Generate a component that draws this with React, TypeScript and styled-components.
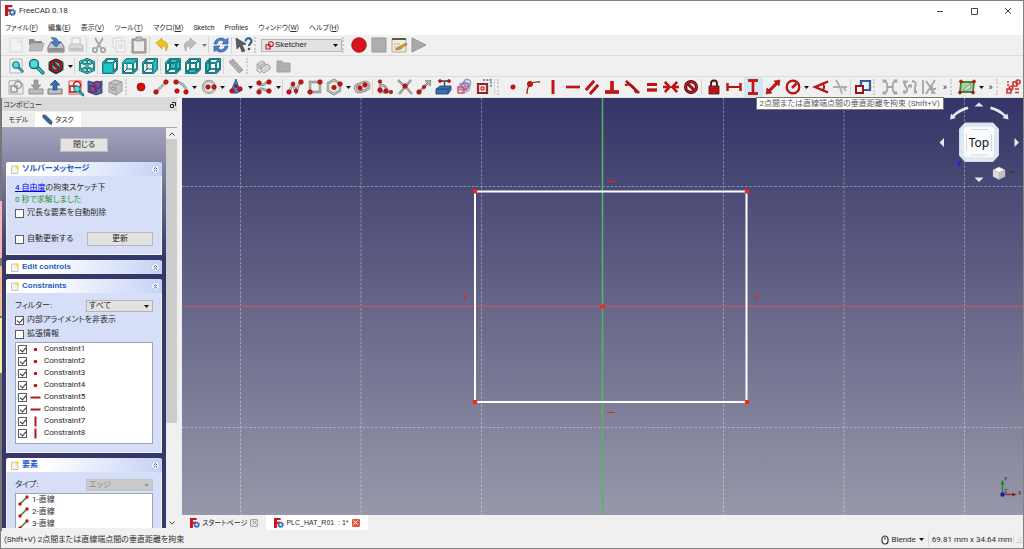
import React from 'react';
import styled, { createGlobalStyle, css } from 'styled-components';

const GlobalStyle = createGlobalStyle`
  * { box-sizing: border-box; }
  body {
    margin: 0;
    font-family: Roboto, "Noto Sans CJK JP", sans-serif;
    font-size: 8px;
    line-height: 12px;
    font-feature-settings: "palt";
    color: #2b2b2b;
    background: #f0f0f0;
  }
  button, select, input { font: inherit; font-feature-settings: inherit; color: inherit; margin: 0; }
  svg { display: block; flex: none; }
`;

/* ---------- shared drawing pieces ---------- */

const RED = '#cc1111';
const DARK = '#4a1010';
const GREY = '#a6a6a6';
const TEAL = '#1fc4c8';
const TEAL_DARK = '#0b5a60';

const Dot = ({ x, y, r = 2.3 }: { x: number; y: number; r?: number }) => (
  <circle cx={x} cy={y} r={r} fill={RED} stroke="#8a0b0b" strokeWidth=".6" />
);

const Wire = ({ d, w = 2.4 }: { d: string; w?: number }) => (
  <>
    <path d={d} fill="none" stroke="#777" strokeWidth={w} />
    <path d={d} fill="none" stroke="#c9ccc6" strokeWidth={w - 1.2} />
  </>
);

const Bold = ({ d, w = 2.4 }: { d: string; w?: number }) => (
  <>
    <path d={d} fill="none" stroke="#8a1414" strokeWidth={w} />
    <path d={d} fill="none" stroke={RED} strokeWidth={w - 0.7} />
  </>
);

const Cube = ({ face }: { face: 'iso' | 'front' | 'top' | 'right' | 'rear' | 'bottom' | 'left' }) => {
  if (face === 'iso') {
    return (
      <g fill="none" stroke={TEAL_DARK} strokeWidth="2.2" strokeLinejoin="round">
        <path d="M10 3l7 3v8l-7 3-7-3V6zM3 6l7 3 7-3M10 9v8M10 3v8M3 14l7-3 7 3" />
        <path stroke="#43d3d6" strokeWidth=".8" d="M10 3l7 3v8l-7 3-7-3V6zM3 6l7 3 7-3M10 9v8M10 3v8M3 14l7-3 7 3" />
      </g>
    );
  }
  const faces = {
    front: 'M3 7h10v10H3z',
    top: 'M3 7l4-4h10l-4 4z',
    right: 'M13 7l4-4v10l-4 4z',
    rear: 'M7 3h10v10H7z',
    bottom: 'M3 17l4-4h10l-4 4z',
    left: 'M3 7l4-4v10l-4 4z',
  };
  const frame = 'M3 7h10v10H3zM3 7l4-4h10l-4 4M17 3v10l-4 4';
  const inner = 'M7 3v10h10M7 13l-4 4';
  const hidden = face === 'rear' || face === 'bottom' || face === 'left';
  return (
    <g fill="none" strokeLinejoin="round">
      <path d={frame} fill="#e8f6f6" />
      {hidden && <path d={faces[face]} fill={TEAL} />}
      <path d={inner} stroke={TEAL_DARK} strokeWidth={hidden ? 1.6 : 1} />
      <path d={frame} stroke={TEAL_DARK} strokeWidth="2" />
      {!hidden && <path d={faces[face]} fill={TEAL} stroke={TEAL_DARK} />}
      <path d={frame} stroke="#43d3d6" strokeWidth=".6" />
    </g>
  );
};

const Magnifier = ({ x, y, s = 1 }: { x: number; y: number; s?: number }) => (
  <g transform={`translate(${x} ${y}) scale(${s})`}>
    <path d="M3 3l5 5" stroke={TEAL_DARK} strokeWidth="3.4" strokeLinecap="round" />
    <path d="M3 3l5 5" stroke={TEAL} strokeWidth="1.8" strokeLinecap="round" />
    <circle r="4" fill="#5fd6d9" stroke={TEAL_DARK} strokeWidth="1.4" />
    <circle r="3.6" fill="none" stroke={TEAL} strokeWidth=".8" />
  </g>
);

const ForbidSign = () => (
  <g fill="none">
    <circle cx="10" cy="10" r="5.4" stroke="#3c0505" strokeWidth="3.2" />
    <path d="M6.5 6.5l7 7" stroke="#3c0505" strokeWidth="2.8" />
    <circle cx="10" cy="10" r="5.4" stroke="#c3161a" strokeWidth="1.6" />
    <path d="M6.3 6.3l7.4 7.4" stroke="#c3161a" strokeWidth="1.4" />
  </g>
);

const SketchMark = ({ color }: { color: string }) => (
  <g fill="none" stroke={color} strokeWidth="1.5">
    <path d="M5 9h6v6H5z" />
    <circle cx="12" cy="8" r="3.5" />
  </g>
);

const icons: Record<string, React.ReactNode> = {
  newFile: <path d="M4 3h12v14H4zM12 3v4h4" fill="#f3f3f3" stroke="#d9d9d9" />,
  open: <><path d="M3 4h5l1 2h7v4H3z" fill="#8d8d8d" /><path d="M3 16L5 8h13l-2 8z" fill="#b9b9b9" stroke="#999" strokeWidth=".6" /></>,
  save: <><path d="M2 12l3-5h10l3 5v5H2z" fill="#c4c6c9" stroke="#777" /><path d="M3 13h14v3H3z" fill="#8e9194" /><path d="M5 3c5-1 7 1 7 4h3l-5 5-5-5h3c0-2-1-3-3-4z" fill="#4a7fc0" stroke="#285a9c" strokeWidth=".7" /></>,
  print: <><path d="M6 3h8v7H6z" fill="#f4f4f4" stroke="#c4c4c4" /><path d="M3 11l2-2h10l2 2v5H3z" fill="#d9d9d9" stroke="#bdbdbd" /><path d="M4 14h12" stroke="#aaa" /></>,
  cut: <g fill="none" stroke={GREY} strokeWidth="1.8"><path d="M6 3l6 10M14 3L8 13" /><circle cx="6" cy="15" r="2.2" /><circle cx="14" cy="15" r="2.2" /></g>,
  copy: <g fill="#f5f5f5" stroke="#d2d2d2"><path d="M4 3h9v10H4z" /><path d="M7 6h9v11H7z" /><path d="M9 9h5M9 11h5M9 13h5" /></g>,
  paste: <g><path d="M3 4h14v14H3z" fill="#a9a9a9" stroke="#8e8e8e" /><path d="M5 6h10v10H5z" fill="#ececec" /><path d="M7 2h6v4H7z" fill="#bbb" stroke="#8e8e8e" strokeWidth=".7" /></g>,
  undo: <path d="M4 8l6-5v3c6 0 7 5 4 10 0-4-1-5-4-5v3z" fill="#efc322" stroke="#c79a10" strokeWidth=".7" />,
  redo: <path d="M16 8l-6-5v3c-6 0-7 5-4 10 0-4 1-5 4-5v3z" fill="#bcbcbc" stroke="#a2a2a2" strokeWidth=".7" />,
  refresh: <g fill="#4c7fc6" stroke="#24529b" strokeWidth=".6"><path d="M3 9C4 3 11 1 15 5l2-2v6h-6l2-2C10 4 7 5 6 9z" /><path d="M17 11c-1 6-8 8-12 4l-2 2v-6h6l-2 2c3 3 6 2 7-2z" /></g>,
  whatsThis: <><path d="M2 3l10 6-4 1 3 6-3 1-2-6-3 3z" fill="#5a5f63" stroke="#333" strokeWidth=".6" /><path d="M11.500 6.500c0-4.500 6.500-4 6 0-.3 2-2.500 2-2.500 4.500" fill="none" stroke="#29598f" strokeWidth="2" /><circle cx="15" cy="14" r="1.300" fill="#29598f" /></>,
  record: <circle cx="10" cy="10" r="7.300" fill="#d9131b" stroke="#960d10" strokeWidth=".8" />,
  stop: <path d="M3 3h14v14H3z" fill="#aeaeae" stroke="#989898" />,
  edit: <><path d="M3 4h14v13H3z" fill="#f0eeda" stroke="#aaa89a" /><path d="M3 3h14v2H3z" fill="#5c5a4c" /><path d="M5 9h6M5 12h8M5 14h9" stroke="#b9b7a8" /><path d="M8 13l9-5 1 1.500-8 5-3 .5z" fill="#e29a2d" stroke="#8a5a12" strokeWidth=".6" /></>,
  play: <path d="M3 3l14 7-14 7z" fill="#a9a9a9" stroke="#959595" />,
  fitAll: <><path d="M4 3h12v14H4z" fill="#f2f2f2" stroke="#b5b5b5" /><Magnifier x={10} y={9} s={0.8} /></>,
  fitSelection: <Magnifier x={8} y={8} s={1.1} />,
  drawStyle: <><path d="M3 6l7-3 7 3v8l-7 4-7-4z" fill={TEAL} stroke={TEAL_DARK} /><ForbidSign /></>,
  iso: <Cube face="iso" />,
  front: <Cube face="front" />,
  top: <Cube face="top" />,
  right: <Cube face="right" />,
  rear: <Cube face="rear" />,
  bottom: <Cube face="bottom" />,
  left: <Cube face="left" />,
  measure: <><path d="M3 6l4-3 10 11-4 3z" fill="#b5b5b5" stroke="#969696" strokeWidth=".8" /><path d="M7 5L5.500 6M9 7L7.500 8M11 9.500L9.500 10.500M13 11.500l-1.500 1M15 14l-1.500 1" stroke="#777" strokeWidth=".7" /></>,
  part: <g fill="#d4d4d4" stroke="#9a9a9a" strokeWidth=".9"><path d="M4 8l5-3 3 2v3l-5 3-3-2z" /><path d="M8 12l6-4 3 2v3l-6 4-3-2z" /><path d="M4 8l3 2 5-3M7 10v3M4 12v3l4 2" /></g>,
  folder: <path d="M4 5h5l1 2h7v9H4z" fill="#b0b0b0" stroke="#a0a0a0" />,
  newSketch: <><path d="M3 4l10-1 4 4v10H3z" fill="#ededed" stroke="#a9a9a9" /><SketchMark color="#9b9b9b" /></>,
  editSketch: <><path d="M3 12h14v5H3z" fill="#bbb" stroke="#929292" /><path d="M8 3h4v5h3l-5 5-5-5h3z" fill="#9d9d9d" stroke="#858585" strokeWidth=".6" /></>,
  leaveSketch: <><path d="M3 12h14v5H3z" fill="#bfc1c4" stroke="#777" /><path d="M8 13h4V8h3l-5-5-5 5h3z" fill="#3c6eb4" stroke="#1e4787" strokeWidth=".7" /></>,
  viewSketch: <><path d="M4 4h12v13H4z" fill="#fbfbfb" stroke="#d33" strokeWidth=".9" /><SketchMark color={RED} /><Magnifier x={12} y={12} s={0.75} /></>,
  viewSection: <><path d="M3 4l8 2 6-2v12l-6 2-8-3z" fill="#3b6db2" stroke="#1b3d70" strokeWidth=".8" /><SketchMark color="#a3194b" /></>,
  mapSketch: <><path d="M4 6l6-3 7 2v9l-6 4-7-3z" fill="#c4c4c4" stroke="#999" /><path d="M4 6l7 2 6-3M11 8v9" fill="none" stroke="#999" /><circle cx="8" cy="11.500" r="1.600" fill="none" stroke="#8a8a8a" /></>,
  point: <circle cx="10" cy="10" r="4" fill={RED} stroke="#7d0909" strokeWidth=".7" />,
  line: <><Wire d="M5 15L15 5" /><Dot x={5} y={15} /><Dot x={15} y={5} /></>,
  arc: <><Wire d="M5 5c5 0 10 4 11 10" /><Dot x={5} y={5} /><Dot x={6} y={14} /><Dot x={15} y={15} /></>,
  circle: <><circle cx="10" cy="10" r="6" fill="none" stroke="#888" strokeWidth="2.400" /><circle cx="10" cy="10" r="6" fill="none" stroke="#c9ccc6" strokeWidth="1.200" /><Dot x={9} y={10} /><Dot x={15} y={10} /></>,
  conic: <><path d="M10 2l4 12c-2 3-7 3-9 0z" fill="#4a82c2" stroke="#1e4787" strokeWidth=".8" /><Dot x={6} y={14} /><Dot x={14} y={12} /><Dot x={10} y={9} r={1.5} /></>,
  bspline: <><Wire d="M5 15c0-6 5-2 10-1M4 6c5 5 7-1 11-1" /><Dot x={5} y={6} /><Dot x={15} y={5} /><Dot x={5} y={15} /><Dot x={15} y={14} /></>,
  polyline: <><Wire d="M4 15l4-8 3 8 4-10" /><Dot x={4} y={15} /><Dot x={8} y={7} r={2} /><Dot x={11} y={14} r={2} /><Dot x={16} y={5} /></>,
  rectangle: <><Wire d="M5 5h10v10H5z" /><Dot x={15} y={5} /><Dot x={5} y={15} /></>,
  polygon: <><Wire d="M10 3l6 3.500v7L10 17l-6-3.500v-7z" /><Dot x={10} y={10.5} /><Dot x={16} y={7} /></>,
  slot: <><Wire d="M7 7l5-2c6-1 7 6 2 8l-6 2C3 16 1 9 7 7z" /><Dot x={8} y={11} /><Dot x={13} y={8} /></>,
  fillet: <><Wire d="M5 4v11h11" /><Wire d="M5 8c6 0 7 4 7 7" /><Dot x={5} y={4.5} r={1.7} /><Dot x={5} y={13} /><Dot x={11} y={14} /><Dot x={16} y={15} r={1.7} /></>,
  trim: <><Wire d="M3 3c4 4 6 6 7 6l7 8M16 3L4 17" w={2.2} /><Dot x={10} y={9} /></>,
  extend: <><Wire d="M5 15L15 5M11 4h5v5" w={2.2} /><Dot x={5} y={15} /><Dot x={10} y={10} r={1.7} /></>,
  external: <><path d="M2 12l4-3h11v4l-3 4H2z" fill="#3c6fae" stroke="#1b3d70" strokeWidth=".8" /><path d="M2 12h12v5M14 12l3-3" fill="none" stroke="#1b3d70" strokeWidth=".7" /><path d="M6 4h9M10.500 4v5" stroke="#444" strokeWidth="1.400" /><Dot x={6} y={4} r={1.5} /><Dot x={15} y={4} r={1.5} /></>,
  carbonCopy: <><g transform="translate(1 -2)"><SketchMark color="#7c9ce0" /></g><g transform="translate(-1 1)"><SketchMark color="#dc4a55" /></g><circle cx="11" cy="10" r="5" fill="none" stroke="#8f9fe0" strokeWidth="1.200" /></>,
  construction: <><path d="M9 3h8v8" fill="none" stroke="#3f72b8" strokeWidth="1.500" strokeDasharray="2 1.200" /><path d="M4 7h9v9H4z" fill="none" stroke={DARK} strokeWidth="2.200" /><path d="M4 7h9v9H4z" fill="none" stroke="#e03434" strokeWidth="1.200" /><path d="M7 10h3v3H7z" fill="#f6caca" stroke={RED} /></>,
  coincident: <circle cx="10" cy="10" r="2.300" fill={RED} stroke="#8a0b0b" strokeWidth=".5" />,
  pointOnObject: <><path d="M4 17C4 8 8 4 17 5" fill="none" stroke="#9c2525" strokeWidth="1.300" /><Dot x={7} y={7} r={2.7} /></>,
  vertical: <Bold d="M10 3v14" w={2.8} />,
  horizontal: <Bold d="M3 10h14" w={2.600} />,
  parallel: <Bold d="M4 13L12 4M8 17l8-9" w={2.8} />,
  perpendicular: <Bold d="M10 4v11M3 15h14" w={3.4} />,
  tangent: <><Bold d="M4 4l13 12" /><Bold d="M3 8c6-2 10 2 11 8" w={2} /></>,
  equal: <Bold d="M5 7.500h10M5 13h10" w={3} />,
  symmetric: <Bold d="M4 5l4.500 5L4 15M16 5l-4.500 5 4.500 5M2 10h6M12 10h6" w={2.600} />,
  block: <ForbidSign />,
  lock: <><path d="M7 9V6.500c0-4 6-4 6 0V9" fill="none" stroke={DARK} strokeWidth="1.800" /><path d="M5 9h10v8H5z" fill="#c81414" stroke={DARK} strokeWidth=".8" /><path d="M6 11.500h8M6 14h8" stroke="#8d0f0f" strokeWidth=".7" /></>,
  hDistance: <Bold d="M3.500 6v8M16.500 6v8M3.500 10h13" w={2.200} />,
  vDistance: <Bold d="M5 3.500h10M5 16.500h10M10 4v12" w={2.600} />,
  distance: <><Bold d="M5 15L15 5" w={3} /><path d="M17 3l-1 6-5-5zM3 17l1-6 5 5z" fill={RED} stroke="#8a1414" strokeWidth=".6" /></>,
  radius: <><circle cx="10" cy="10" r="6.300" fill="none" stroke="#8a1414" strokeWidth="2.200" /><circle cx="10" cy="10" r="6.300" fill="none" stroke={RED} strokeWidth="1.400" /><path d="M9 11l4.500-4.500" stroke={RED} strokeWidth="2.600" /></>,
  angle: <><Bold d="M17 4.500L4 10l13 5.500" w={2.200} /><Bold d="M12 7c1.500 2 1.500 4 0 6" w={1.800} /></>,
  snell: <path d="M3 10h14M6 3l4 7 2 7M13 10l3 4" fill="none" stroke="#adadad" strokeWidth="1.800" />,
  toggle: <><path d="M8 4h9v9H8z" fill="none" stroke="#1e4787" strokeWidth="2.200" /><path d="M8 4h9v9H8z" fill="none" stroke="#4f86c6" strokeWidth=".8" /><path d="M3 9h7v7H3z" fill="#fafafa" stroke="#9d1414" strokeWidth="2" /></>,
  closeShape: <g fill="none" stroke={GREY} strokeWidth="1.800"><path d="M4 4c3 1 4 3 3 6 1 3 0 5-3 6M16 4c-3 1-4 3-3 6-1 3 0 5 3 6M7 10h6" /><path d="M2.500 4h4M13.500 4h4M2.500 16h4M13.500 16h4" strokeWidth="3" /></g>,
  connect: <g fill="none" stroke={GREY} strokeWidth="1.800"><path d="M8 4C4 5 4 8 6 10s2 4-1 6M12 4c5 1 4 4 3 6v6" /><path d="M3 5h3M3 15h3M14 15h3M8 9h4" strokeWidth="3" /></g>,
  selectConstraints: <g fill="none" stroke={GREY} strokeWidth="1.800"><path d="M4 3v14M7 4l9 13M16 3l-9 14M10 12h7M13 9v8" /></g>,
  switchSpace: <><path d="M4 5h13l-1 10H3z" fill="#a9d39b" stroke="#3b8e2e" strokeWidth="1.800" /><path d="M6 13l8-7v5l-6 3z" fill="#d8d8d8" stroke="#777" strokeWidth=".7" /><Dot x={4} y={4.5} r={1.5} /><Dot x={17} y={4.5} r={1.5} /><Dot x={3} y={15.5} r={1.5} /><Dot x={16} y={15.5} r={1.5} /></>,
  gridSketch: <g fill="none" stroke="#d43434" strokeWidth="1.600"><path d="M10 5h4v4h-4z" /><circle cx="15" cy="5" r="2" /><path d="M4 12h4v4H4z" /><circle cx="8" cy="11" r="1.800" /><path d="M12 12h4M12 15.500h4M4 5h2M4 8h2" /></g>,
};

const Logo = ({ size = 11 }: { size?: number }) => (
  <svg width={size} height={size} viewBox="0 0 12 12" aria-hidden="true">
    <path d="M0 0h8v2.500H3.500v2H7v2.500H3.500V12H0z" fill="#c9141c" />
    <circle cx="8" cy="8" r="2.300" fill="none" stroke="#3f6eb0" strokeWidth="1.800" />
    <circle cx="8" cy="8" r="3.600" fill="none" stroke="#3f6eb0" strokeWidth="1.200" strokeDasharray="1.400 1.400" />
  </svg>
);

/* ---------- window chrome ---------- */

const Window = styled.div`
  display: flex;
  flex-direction: column;
  height: 100vh;
  min-height: 480px;
  border: 1px solid #828282;
`;

const TitleBar = styled.header`
  display: flex;
  align-items: center;
  gap: 3px;
  height: 19px;
  flex: none;
  padding-left: 4px;
  background: #fff;
`;

const Title = styled.h1`
  flex: 1;
  margin: 0;
  font-size: 8px;
  font-weight: 400;
`;

const CaptionButton = styled.button`
  display: flex;
  justify-content: center;
  width: 31px;
  padding: 0;
  border: 0;
  background: none;
`;

const MenuBar = styled.nav`
  display: flex;
  align-items: center;
  gap: 10px;
  height: 15px;
  flex: none;
  padding-left: 4px;
  background: #fff;
`;

const MenuLink = styled.a`
  color: #2b2b2b;
  font-size: 7px;
  text-decoration: none;
  white-space: nowrap;
`;

const Toolbar = styled.div`
  display: flex;
  align-items: center;
  height: 21px;
  flex: none;
  padding-left: 5px;
  border-bottom: 1px solid #dcdcdc;
  background: #f0f0f0;
`;

const ToolButton = styled.button<{ $active?: boolean }>`
  display: flex;
  justify-content: center;
  align-items: center;
  position: relative;
  flex: 0 1 20px;
  min-width: 0;
  height: 20px;
  padding: 0;
  border: 0;
  background: ${(p) => (p.$active ? '#d5e6f3' : 'none')};
`;

const ArrowButton = styled.button`
  display: flex;
  justify-content: center;
  align-items: center;
  flex: none;
  width: 8px;
  height: 20px;
  padding: 0;
  border: 0;
  background: none;
`;

const Separator = styled.span`
  flex: none;
  width: 3px;
  height: 16px;
  border-left: 1px solid #d4d4d4;
`;

const Handle = styled.span`
  flex: none;
  width: 7px;
  height: 16px;
  border-left: 2px dotted #cfcfcf;
`;

const MoreButton = styled.button`
  flex: none;
  width: 11px;
  padding: 0;
  border: 0;
  background: none;
  font-size: 9px;
`;

const Tooltip = styled.span`
  position: absolute;
  z-index: 2;
  top: 20px;
  left: 12px;
  padding: 0 3px;
  border: 1px solid #767676;
  background: #fff;
  color: #575757;
  line-height: 11px;
  white-space: nowrap;
`;

const Tool = ({ name, label, active, children }: { name: string; label: string; active?: boolean; children?: React.ReactNode }) => (
  <ToolButton type="button" aria-label={label} $active={active}>
    <svg width="20" height="20" viewBox="0 0 20 20" aria-hidden="true">{icons[name]}</svg>
    {children}
  </ToolButton>
);

const Tools = ({ names }: { names: string[] }) => <>{names.map((n) => <Tool key={n} name={n} label={n} />)}</>;

const Caret = ({ color = '#111' }: { color?: string }) => (
  <svg width="5" height="3" viewBox="0 0 5 3" aria-hidden="true"><path d="M0 0h5L2.500 3z" fill={color} /></svg>
);

const Drop = ({ color }: { color?: string }) => (
  <ArrowButton type="button" aria-label="more"><Caret color={color} /></ArrowButton>
);

/* ---------- form controls ---------- */

const SelectFrame = styled.span<{ $disabled?: boolean; $toolbar?: boolean }>`
  display: flex;
  align-items: center;
  width: ${(p) => (p.$toolbar ? '81px' : '67px')};
  height: ${(p) => (p.$toolbar ? '13px' : '12px')};
  flex: none;
  padding: 0 3px 0 2px;
  border: 1px solid ${(p) => (p.$disabled ? '#bfc3cf' : '#b4b4b4')};
  background: ${(p) => (p.$disabled ? '#cacaca' : '#e2e2e2')};
  color: ${(p) => (p.$disabled ? '#8c8c8c' : '#1d1d1d')};
`;

const SelectBox = styled.select`
  flex: 1;
  min-width: 0;
  height: 10px;
  padding: 0;
  border: 0;
  appearance: none;
  background: none;
  line-height: 10px;
  opacity: 1;
  font-family: "Liberation Sans", "Noto Sans CJK JP", sans-serif;
`;

const PushButton = styled.button<{ $width: number }>`
  width: ${(p) => p.$width}px;
  height: 14px;
  padding: 0;
  border: 1px solid #b9b9b9;
  background: #e2e2e2;
  line-height: 12px;
`;

const CheckLabel = styled.label`
  display: flex;
  align-items: center;
  gap: 3px;
`;

const CheckBox = styled.input.attrs({ type: 'checkbox' })`
  appearance: none;
  display: block;
  flex: none;
  width: 9px;
  height: 9px;
  border: 1px solid #5c5c5c;
  background: #fff;
  &:checked::after {
    content: '';
    display: block;
    width: 3px;
    height: 5px;
    margin: 0 2px;
    border: solid #333;
    border-width: 0 1px 1px 0;
    transform: rotate(40deg);
  }
`;

/* ---------- left dock ---------- */

const Body = styled.div`
  display: flex;
  flex: 1;
  min-height: 0;
`;

const BackEdge = styled.div`
  width: 2px;
  margin-left: -1px;
  flex: none;
  background: linear-gradient(#777 0 103px, #f0b9b4 103px 160px, #777 160px 168px, #f2bd8c 168px 218px, #777 218px 220px, #eeee9c 220px 275px, #777 275px);
`;

const Dock = styled.aside`
  display: flex;
  flex-direction: column;
  width: 175px;
  flex: none;
  min-height: 0;
  margin-bottom: 3px;
`;

const DockHeader = styled.div`
  display: flex;
  align-items: center;
  justify-content: space-between;
  height: 13px;
  flex: none;
  padding: 0 1px 0 1px;
  background: #dadada;
  font-size: 7px;
`;

const DockTabs = styled.div`
  display: flex;
  align-items: flex-end;
  height: 17px;
  flex: none;
  border-bottom: 1px solid #a8a8b2;
`;

const DockTab = styled.button<{ $active?: boolean }>`
  display: flex;
  align-items: center;
  justify-content: center;
  gap: 2px;
  width: ${(p) => (p.$active ? 46 : 33)}px;
  height: ${(p) => (p.$active ? 15 : 14)}px;
  padding: 0;
  border: 0;
  background: ${(p) => (p.$active ? '#fff' : '#ececec')};
  font-size: 7px;
`;

const DockBody = styled.div`
  display: flex;
  flex: 1;
  min-height: 0;
`;

const TaskArea = styled.div`
  display: flex;
  flex-direction: column;
  flex: 1;
  gap: 5px;
  min-height: 0;
  padding: 10px 4px 0;
  overflow: hidden;
  background: linear-gradient(#a3a3bb, #37376a 130px);
`;

const CloseRow = styled.div`
  display: flex;
  justify-content: center;
  flex: none;
  padding-bottom: 5px;
`;

const Scrollbar = styled.div`
  display: flex;
  flex-direction: column;
  width: 11px;
  flex: none;
  background: #f0f0f0;
`;

const ScrollButton = styled.button`
  display: flex;
  align-items: center;
  justify-content: center;
  width: 11px;
  height: 11px;
  padding: 0;
  border: 0;
  background: none;
`;

const ScrollTrack = styled.div`
  flex: 1;
  &::before {
    content: '';
    display: block;
    height: 75%;
    background: #cdcdcd;
  }
`;

const Card = styled.section`
  flex: none;
  border-radius: 2px 2px 0 0;
  overflow: hidden;
`;

const CardHeader = styled.h2`
  display: flex;
  align-items: center;
  gap: 3px;
  height: 14px;
  margin: 0;
  padding: 0 2px 0 5px;
  background: linear-gradient(90deg, #fff 25%, #c6d3f7);
  color: #215dc6;
  font-family: "Liberation Sans", "Noto Sans CJK JP", sans-serif;
  font-size: 8px;
  font-weight: 700;
`;

const CardTitle = styled.span`
  flex: 1;
`;

const CardBody = styled.div<{ $size: 'message' | 'constraints' | 'elements' }>`
  display: flex;
  flex-direction: column;
  padding: 6px 8px 0;
  border: 1px solid #f4f6fd;
  border-top: 0;
  background: #d6dff7;
  ${(p) => p.$size === 'message' && css`height: 79px;`}
  ${(p) => p.$size === 'constraints' && css`height: 160px;`}
`;

const Line = styled.p<{ $good?: boolean }>`
  margin: 0;
  color: ${(p) => (p.$good ? '#1d9128' : 'inherit')};
`;

const FieldRow = styled.div`
  display: flex;
  align-items: center;
  justify-content: space-between;
  height: 14px;
`;

const UpdateRow = styled(FieldRow)`
  margin-top: 12px;
`;

const CheckRow = styled(FieldRow)`
  justify-content: flex-start;
`;

const ItemList = styled.ul`
  margin: 1px 0 0;
  padding: 0 2px;
  border: 1px solid #9da5b5;
  background: #fff;
  height: 102px;
  list-style: none;
`;

const Item = styled.li`
  display: flex;
  align-items: center;
  gap: 3px;
  height: 12px;
`;

const SheetIcon = () => (
  <svg width="8" height="9" viewBox="0 0 8 9" aria-hidden="true">
    <path d="M.5 1h6.500v7.500H.5z" fill="#f5f3ea" stroke="#b7b7b7" strokeWidth=".8" />
    <circle cx="6" cy="2" r="1.800" fill="#f3e13a" />
  </svg>
);

const Chevrons = () => (
  <svg width="9" height="9" viewBox="0 0 9 9" aria-hidden="true">
    <circle cx="4.500" cy="4.500" r="4" fill="#fff" stroke="#aebbe0" strokeWidth=".8" />
    <path d="M2.700 4.200l1.800-1.700 1.800 1.700M2.700 6.700L4.500 5l1.800 1.700" fill="none" stroke="#2d4c9a" />
  </svg>
);

const TaskCard = ({ title, children }: { title: string; children?: React.ReactNode }) => (
  <Card>
    <CardHeader><SheetIcon /><CardTitle>{title}</CardTitle><Chevrons /></CardHeader>
    {children}
  </Card>
);

const ConstraintIcon = ({ kind }: { kind: string }) => (
  <svg width="11" height="11" viewBox="0 0 11 11" aria-hidden="true">
    {kind === 'point' && <circle cx="5.500" cy="5.500" r="1.800" fill={RED} />}
    {kind === 'h' && <path d="M.5 5.500h10" stroke="#b01c1c" strokeWidth="2" />}
    {kind === 'v' && <path d="M5.500 .5v10" stroke="#b01c1c" strokeWidth="2" />}
  </svg>
);

const constraints = ['point', 'point', 'point', 'point', 'h', 'h', 'v', 'v'];

/* ---------- drawing area ---------- */

const Workspace = styled.main`
  display: flex;
  flex-direction: column;
  flex: 1;
  min-width: 0;
  margin-left: 5px;
`;

const Viewport = styled.div`
  flex: 1;
  min-height: 0;
  background: linear-gradient(#343467, #9898ab);
  svg { width: 100%; height: 100%; }
`;

const DocTabs = styled.div`
  display: flex;
  gap: 4px;
  height: 16px;
  flex: none;
  padding-left: 4px;
`;

const DocTab = styled.div<{ $active?: boolean }>`
  display: flex;
  align-items: center;
  gap: 2px;
  height: 15px;
  padding: 0 ${(p) => (p.$active ? 8 : 4)}px;
  background: ${(p) => (p.$active ? '#fff' : '#f0f0f0')};
  font-family: "Liberation Sans", "Noto Sans CJK JP", sans-serif;
  font-size: 7px;
  white-space: pre;
`;

const TabClose = styled.button<{ $active?: boolean }>`
  display: flex;
  align-items: center;
  justify-content: center;
  width: 8px;
  height: 8px;
  padding: 0;
  margin-left: 1px;
  border: ${(p) => (p.$active ? '0' : '1px solid #a4a4a4')};
  border-radius: 1px;
  background: ${(p) => (p.$active ? '#e0593a' : '#e4e4e4')};
  color: ${(p) => (p.$active ? '#fff' : '#999')};
`;

const Cross = () => (
  <svg width="5" height="5" viewBox="0 0 5 5" aria-hidden="true"><path d="M.5.5l4 4m0-4l-4 4" stroke="currentColor" /></svg>
);

const StatusBar = styled.footer`
  display: flex;
  align-items: center;
  height: 17px;
  flex: none;
  padding: 0 1px 0 3px;
`;

const StatusText = styled.span`
  flex: 1;
`;

const NavStyle = styled.button`
  display: flex;
  align-items: center;
  gap: 3px;
  padding: 0;
  border: 0;
  background: none;
`;

const Coordinates = styled.span`
  margin: 0 2px 0 4px;
  padding: 0 1px 0 3px;
  border: solid #dcdcdc;
  border-width: 0 1px;
  white-space: nowrap;
`;

const verticals = [240.5, 361, 481.5, 723.5, 844, 964.5];
const corners = [[475, 191.5], [747, 191.5], [475, 402], [747, 402], [602.5, 306.5]];

const SketchView = () => (
  <svg viewBox="182 98 841 417" preserveAspectRatio="xMidYMid slice" role="img" aria-label="Sketch">
    <g stroke="#fff" strokeOpacity=".36" strokeDasharray="2.600 1.600">
      {verticals.map((x) => <path key={x} d={`M${x} 98v417`} />)}
      <path d="M182 186.500h841M182 427.500h841" />
    </g>
    <path d="M182 306.500h841" stroke="#b45a68" strokeWidth="1.500" />
    <path d="M602.500 98v417" stroke="#55b75a" strokeWidth="1.500" />
    <path d="M475 191.500h271.500V402H475z" fill="none" stroke="#fff" strokeWidth="2" />
    {corners.map(([x, y]) => <circle key={`${x}-${y}`} cx={x} cy={y} r="2.300" fill="#fb2408" />)}
    <path d="M607 181.300h7.500M607 412.500h7.500M464.500 293v7.500M756.700 293v7.500" stroke="#e02818" strokeWidth="1.200" />

    <g fill="#e3e9f1">
      <path d="M979 102.500l4.500 4h-9zM979 182l4.500-4.500h-9zM939.500 142.500l4.500-4.500v9zM1019 142.500l-4.500-4.500v9z" />
      <path d="M950 119.500l1-6 1.500 1.500c4-4 9-7 15-8.500l1 2.500c-5 1.500-10 4-14 7.500l1.500 1.500zM1008.500 119.500l-1-6-1.500 1.500c-4-4-9-7-15-8.500l-1 2.500c5 1.500 10 4 14 7.500l-1.500 1.500z" />
    </g>
    <path d="M965 123h28l5.500 6v26.500l-5.500 6h-28l-5.500-6V129z" fill="#dfe7f2" stroke="#d3dceb" strokeWidth="1" strokeLinejoin="round" />
    <rect x="964" y="127" width="30" height="30" rx="2" fill="#fafbfc" />
    <path d="M971 129.500h17M971 155h17M966.500 134v17M991.500 134v17" stroke="#d5d5da" />
    <text x="979" y="147" textAnchor="middle" fontFamily="Noto Sans, sans-serif" fontSize="12" fill="#111">Top</text>
    <text x="957" y="166" fontFamily="Open Sans, sans-serif" fontSize="8" fontWeight="700" fill="#1c1ce8">z</text>
    <g stroke="#b9b9b9" strokeWidth=".4">
      <path d="M993 170l6-3 6 3-6 2.500z" fill="#fff" />
      <path d="M993 170l6 2.500v7l-6-3z" fill="#dedede" />
      <path d="M1005 170l-6 2.500v7l6-3z" fill="#c2c2c2" />
    </g>
    <path d="M1008 171h7l-3.500 3.500z" fill="#3c3c44" />

    <path d="M1002.500 494.500V484" stroke="#178a20" strokeWidth="1.300" />
    <path d="M1002.500 479.500l2 5h-4z" fill="#178a20" />
    <path d="M1002.500 494.500h9" stroke="#9a1c1c" strokeWidth="1.300" />
    <path d="M1017 494.500l-5 2v-4z" fill="#9a1c1c" />
    <circle cx="1002.500" cy="494.500" r="2.200" fill="#1d1db4" />
    <g fontFamily="Open Sans, sans-serif" fontSize="6" fill="#222">
      <text x="1004" y="481">Y</text>
      <text x="1018" y="495">X</text>
      <text x="1004" y="493">Z</text>
    </g>
  </svg>
);

const menus: [string, string?][] = [
  ['ファイル', 'F'], ['編集', 'E'], ['表示', 'V'], ['ツール', 'T'], ['マクロ', 'M'],
  ['Sketch'], ['Profiles'], ['ウィンドウ', 'W'], ['ヘルプ', 'H'],
];

export default function App() {
  return (
    <Window>
      <GlobalStyle />
      <TitleBar>
        <Logo />
        <Title>FreeCAD 0.18</Title>
        <CaptionButton type="button" aria-label="Minimize"><svg width="8" height="8" viewBox="0 0 8 8"><path d="M1 4.500h6" stroke="#444" /></svg></CaptionButton>
        <CaptionButton type="button" aria-label="Maximize"><svg width="8" height="8" viewBox="0 0 8 8"><path d="M1.500 1.500h6v6h-6z" fill="none" stroke="#444" /></svg></CaptionButton>
        <CaptionButton type="button" aria-label="Close"><svg width="8" height="8" viewBox="0 0 8 8"><path d="M1 1l6 6M7 1L1 7" stroke="#444" /></svg></CaptionButton>
      </TitleBar>
      <MenuBar>
        {menus.map(([text, key]) => (
          <MenuLink key={text} href="#">{text}{key && <>(<u>{key}</u>)</>}</MenuLink>
        ))}
      </MenuBar>

      <Toolbar>
        <Tools names={['newFile', 'open', 'save', 'print']} />
        <Separator />
        <Tools names={['cut', 'copy', 'paste']} />
        <Separator />
        <Tool name="undo" label="undo" /><Drop />
        <Tool name="redo" label="redo" /><Drop color="#777" />
        <Separator />
        <Tool name="refresh" label="refresh" />
        <Separator />
        <Tool name="whatsThis" label="whatsThis" />
        <Handle />
        <SelectFrame $toolbar>
          <svg width="11" height="11" viewBox="2 2 16 16" aria-hidden="true"><SketchMark color={RED} /></svg>
          <SelectBox aria-label="Workbench"><option>Sketcher</option></SelectBox>
          <Caret />
        </SelectFrame>
        <Handle />
        <Tools names={['record', 'stop', 'edit', 'play']} />
      </Toolbar>

      <Toolbar>
        <Tools names={['fitAll', 'fitSelection', 'drawStyle']} />
        <Drop /><Separator />
        <Tool name="iso" label="iso" />
        <Separator />
        <Tools names={['front', 'top', 'right']} />
        <Separator />
        <Tools names={['rear', 'bottom', 'left']} />
        <Separator />
        <Tool name="measure" label="measure" />
        <Handle />
        <Tools names={['part', 'folder']} />
      </Toolbar>

      <Toolbar>
        <Tools names={['newSketch', 'editSketch', 'leaveSketch', 'viewSketch', 'viewSection', 'mapSketch']} />
        <Handle />
        <Tools names={['point', 'line', 'arc']} /><Drop />
        <Tool name="circle" label="circle" /><Drop />
        <Tool name="conic" label="conic" /><Drop />
        <Tool name="bspline" label="bspline" /><Drop /><Separator />
        <Tools names={['polyline', 'rectangle', 'polygon']} /><Drop />
        <Tool name="slot" label="slot" />
        <Separator />
        <Tools names={['fillet', 'trim', 'extend', 'external', 'carbonCopy', 'construction']} />
        <Separator /><Handle />
        <Tools names={['coincident', 'pointOnObject', 'vertical', 'horizontal', 'parallel', 'perpendicular', 'tangent', 'equal', 'symmetric', 'block']} />
        <Separator />
        <Tools names={['lock', 'hDistance']} />
        <Tool name="vDistance" label="垂直距離" active>
          <Tooltip role="tooltip">2点間または直線端点間の垂直距離を拘束 (Shift+V)</Tooltip>
        </Tool>
        <Tools names={['distance', 'radius']} /><Drop />
        <Tools names={['angle', 'snell']} />
        <Separator />
        <Tool name="toggle" label="toggle" />
        <Handle />
        <Tools names={['closeShape', 'connect', 'selectConstraints']} />
        <MoreButton type="button">»</MoreButton>
        <Handle />
        <Tool name="switchSpace" label="switchSpace" /><Drop />
        <MoreButton type="button">»</MoreButton>
        <Handle />
        <Tool name="gridSketch" label="gridSketch" />
      </Toolbar>

      <Body>
        <BackEdge />
        <Dock>
          <DockHeader>
            コンボビュー
            <svg width="6" height="6" viewBox="0 0 6 6" aria-hidden="true"><path d="M2 .5h3.500V4M.5 2.500h3v3h-3z" fill="none" stroke="#222" strokeWidth="1" /></svg>
          </DockHeader>
          <DockTabs>
            <DockTab type="button">モデル</DockTab>
            <DockTab type="button" $active>
              <svg width="11" height="11" viewBox="0 0 11 11" aria-hidden="true"><path d="M1 1l3 .5 6 6-.5 3-2.500-1-6-6z" fill="#3a6597" stroke="#1d3c60" strokeWidth=".7" /></svg>
              タスク
            </DockTab>
          </DockTabs>
          <DockBody>
            <TaskArea>
              <CloseRow><PushButton type="button" $width={48}>閉じる</PushButton></CloseRow>

              <TaskCard title="ソルバーメッセージ">
                <CardBody $size="message">
                  <Line><a href="#">4 自由度</a>の拘束スケッチ下</Line>
                  <Line $good>0 秒で求解しました</Line>
                  <CheckRow><CheckLabel><CheckBox />冗長な要素を自動削除</CheckLabel></CheckRow>
                  <UpdateRow>
                    <CheckLabel><CheckBox />自動更新する</CheckLabel>
                    <PushButton type="button" $width={66}>更新</PushButton>
                  </UpdateRow>
                </CardBody>
              </TaskCard>

              <TaskCard title="Edit controls" />

              <TaskCard title="Constraints">
                <CardBody $size="constraints">
                  <FieldRow>
                    <label htmlFor="filter">フィルター:</label>
                    <SelectFrame><SelectBox id="filter"><option>すべて</option></SelectBox><Caret /></SelectFrame>
                  </FieldRow>
                  <CheckRow><CheckLabel><CheckBox defaultChecked />内部アライメントを非表示</CheckLabel></CheckRow>
                  <CheckRow><CheckLabel><CheckBox />拡張情報</CheckLabel></CheckRow>
                  <ItemList>
                    {constraints.map((kind, i) => (
                      <Item key={i}>
                        <CheckBox defaultChecked id={`constraint${i + 1}`} />
                        <ConstraintIcon kind={kind} />
                        <label htmlFor={`constraint${i + 1}`}>{`Constraint${i + 1}`}</label>
                      </Item>
                    ))}
                  </ItemList>
                </CardBody>
              </TaskCard>

              <TaskCard title="要素">
                <CardBody $size="elements">
                  <FieldRow>
                    <label htmlFor="kind">タイプ:</label>
                    <SelectFrame $disabled><SelectBox id="kind" disabled><option>エッジ</option></SelectBox><Caret color="#999" /></SelectFrame>
                  </FieldRow>
                  <ItemList>
                    {[1, 2, 3].map((n) => (
                      <Item key={n}>
                        <svg width="11" height="11" viewBox="0 0 11 11" aria-hidden="true">
                          <path d="M2 9l7-7" stroke="#3d8a2c" strokeWidth="1.600" />
                          <circle cx="2" cy="9" r="1.700" fill={RED} /><circle cx="9" cy="2" r="1.700" fill={RED} />
                        </svg>
                        {`${n}-直線`}
                      </Item>
                    ))}
                  </ItemList>
                </CardBody>
              </TaskCard>
            </TaskArea>
            <Scrollbar>
              <ScrollButton type="button" aria-label="Scroll up"><svg width="6" height="4" viewBox="0 0 6 4"><path d="M.5 3.500L3 1l2.500 2.500" fill="none" stroke="#444" /></svg></ScrollButton>
              <ScrollTrack />
              <ScrollButton type="button" aria-label="Scroll down"><svg width="6" height="4" viewBox="0 0 6 4"><path d="M.5.5L3 3 5.500.5" fill="none" stroke="#444" /></svg></ScrollButton>
            </Scrollbar>
          </DockBody>
        </Dock>

        <Workspace>
          <Viewport><SketchView /></Viewport>
          <DocTabs>
            <DocTab><Logo size={10} />スタートページ<TabClose type="button" aria-label="Close start page"><Cross /></TabClose></DocTab>
            <DocTab $active><Logo size={10} />PLC_HAT_R01  : 1*<TabClose type="button" aria-label="Close document" $active><Cross /></TabClose></DocTab>
          </DocTabs>
        </Workspace>
      </Body>

      <StatusBar>
        <StatusText>(Shift+V) 2点間または直線端点間の垂直距離を拘束</StatusText>
        <NavStyle type="button">
          <svg width="8" height="10" viewBox="0 0 8 10" aria-hidden="true"><rect x="1" y="1" width="6" height="8" rx="3" fill="#fff" stroke="#333" strokeWidth="1.200" /><path d="M4 2v3" stroke="#333" /></svg>
          Blende
          <Caret />
        </NavStyle>
        <Coordinates>69.81 mm x 34.64 mm</Coordinates>
        <svg width="6" height="6" viewBox="0 0 6 6" aria-hidden="true"><path d="M5 0v1M3 2.500v1M5 2.500v1M1 5v1M3 5v1M5 5v1" stroke="#b5b5b5" strokeWidth="1.200" /></svg>
      </StatusBar>
    </Window>
  );
}
